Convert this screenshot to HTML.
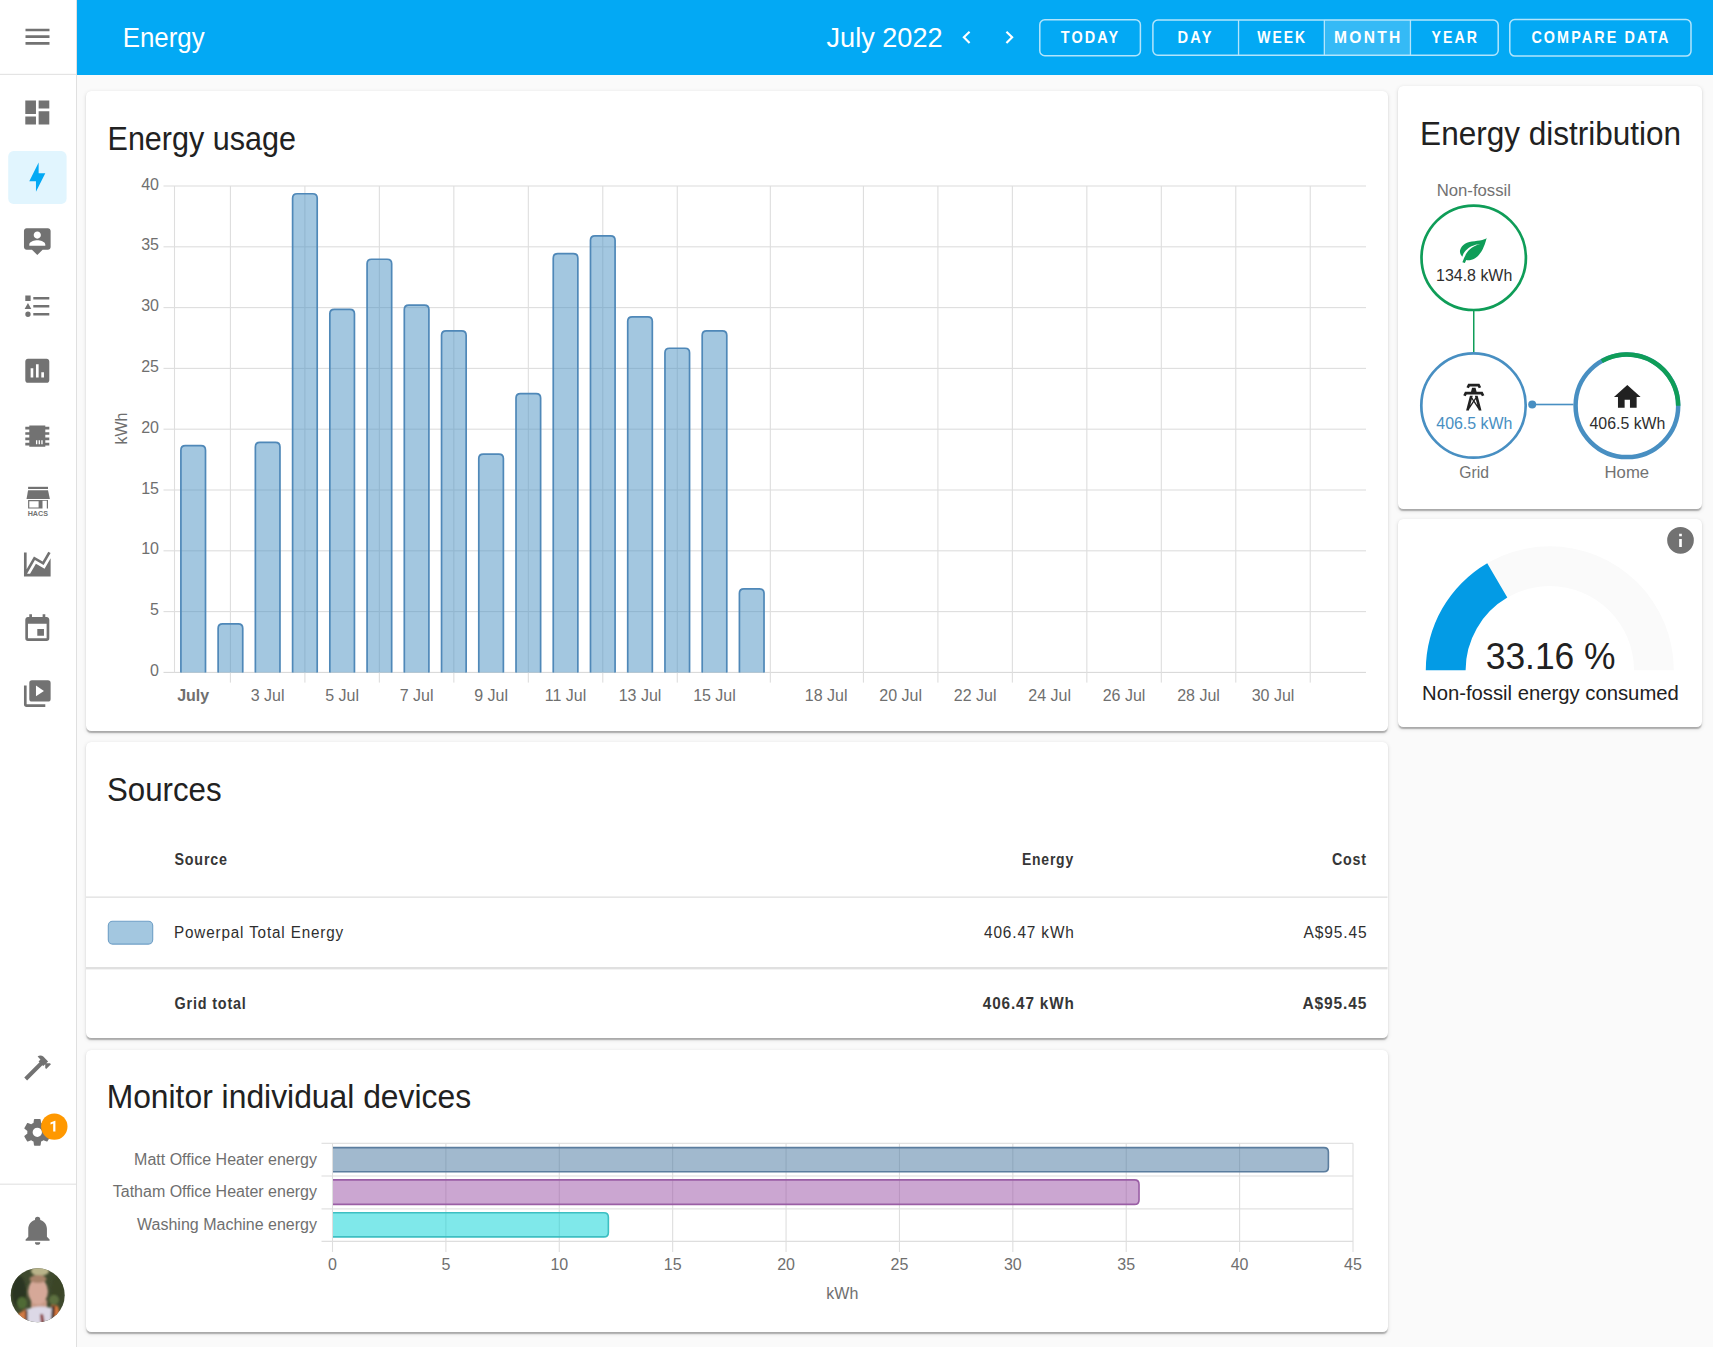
<!DOCTYPE html>
<html><head><meta charset="utf-8"><title>Energy</title>
<style>
html,body{margin:0;padding:0;width:1713px;height:1347px;overflow:hidden;background:#fafafa;font-family:"Liberation Sans",sans-serif}
.card{position:absolute;background:#fff;border-radius:5.3px;box-shadow:0 2.67px 1.33px -1.33px rgba(0,0,0,.13),0 1.33px 1.33px 0 rgba(0,0,0,.14),0 1.33px 4px 0 rgba(0,0,0,.12)}
#sb{position:absolute;left:0;top:0;width:76px;height:1347px;background:#fff;border-right:1px solid #e0e0e0}
svg{position:absolute;left:0;top:0}
</style></head><body>
<div id="sb"></div>
<div class="card" style="left:85.5px;top:91px;width:1302px;height:640px"></div>
<div class="card" style="left:85.5px;top:742px;width:1302px;height:296px"></div>
<div class="card" style="left:85.5px;top:1049.5px;width:1302px;height:282px"></div>
<div class="card" style="left:1398px;top:86px;width:304.3px;height:422.5px"></div>
<div class="card" style="left:1398px;top:519px;width:304.3px;height:208.3px"></div>
<svg width="1713" height="1347" viewBox="0 0 1713 1347" font-family="Liberation Sans, sans-serif">
<rect x="77" y="0" width="1636" height="75" fill="#03a9f4"/>
<text x="122.67" y="46.90" font-size="27.5" fill="#fff" textLength="81.91" lengthAdjust="spacingAndGlyphs">Energy</text>
<text x="826.53" y="46.70" font-size="27.5" fill="#fff" textLength="116.10" lengthAdjust="spacingAndGlyphs">July 2022</text>
<path transform="translate(953.7,24.4) scale(1.08)" d="M15.41,16.58L10.83,12L15.41,7.41L14,6L8,12L14,18L15.41,16.58Z" fill="#fff"/>
<path transform="translate(996.4,24.4) scale(1.08)" d="M8.59,16.58L13.17,12L8.59,7.41L10,6L16,12L10,18L8.59,16.58Z" fill="#fff"/>
<rect x="1039.8" y="19.8" width="100.6" height="36" rx="5" fill="none" stroke="#b3e5fc" stroke-width="1.5"/>
<text x="1060.79" y="43.10" font-size="16.5" font-weight="700" fill="#fff" textLength="59.39" lengthAdjust="spacingAndGlyphs" letter-spacing="2.4">TODAY</text>
<rect x="1324.3" y="19.5" width="86.1" height="36.3" fill="rgba(255,255,255,0.2)"/>
<rect x="1152.9" y="20" width="345.3" height="35.3" rx="5" fill="none" stroke="#b3e5fc" stroke-width="1.5"/>
<rect x="1237.90" y="20" width="1.3" height="35.3" fill="#b3e5fc"/>
<rect x="1323.70" y="20" width="1.3" height="35.3" fill="#b3e5fc"/>
<rect x="1409.80" y="20" width="1.3" height="35.3" fill="#b3e5fc"/>
<text x="1177.59" y="43.00" font-size="16.5" font-weight="700" fill="#fff" textLength="36.02" lengthAdjust="spacingAndGlyphs" letter-spacing="2.4">DAY</text>
<text x="1257.25" y="43.00" font-size="16.5" font-weight="700" fill="#fff" textLength="49.95" lengthAdjust="spacingAndGlyphs" letter-spacing="2.4">WEEK</text>
<text x="1334.07" y="43.00" font-size="16.5" font-weight="700" fill="#fff" textLength="68.42" lengthAdjust="spacingAndGlyphs" letter-spacing="2.4">MONTH</text>
<text x="1431.48" y="43.00" font-size="16.5" font-weight="700" fill="#fff" textLength="47.48" lengthAdjust="spacingAndGlyphs" letter-spacing="2.4">YEAR</text>
<rect x="1509.8" y="19.5" width="181.2" height="36.6" rx="5" fill="none" stroke="#b3e5fc" stroke-width="1.5"/>
<text x="1531.41" y="43.00" font-size="16.5" font-weight="700" fill="#fff" textLength="139.13" lengthAdjust="spacingAndGlyphs" letter-spacing="2.4">COMPARE DATA</text>
<text x="107.52" y="150.00" font-size="32.5" fill="#212121" textLength="188.40" lengthAdjust="spacingAndGlyphs">Energy usage</text>
<rect x="163.5" y="671.85" width="1202.50" height="1.1" fill="#d9d9d9"/>

<text x="159" y="675.90" font-size="16" fill="#6f6f6f" text-anchor="end">0</text>
<rect x="163.5" y="611.05" width="1202.50" height="1.1" fill="#dedede"/>

<text x="159" y="615.10" font-size="16" fill="#6f6f6f" text-anchor="end">5</text>
<rect x="163.5" y="550.25" width="1202.50" height="1.1" fill="#dedede"/>

<text x="159" y="554.30" font-size="16" fill="#6f6f6f" text-anchor="end">10</text>
<rect x="163.5" y="489.45" width="1202.50" height="1.1" fill="#dedede"/>

<text x="159" y="493.50" font-size="16" fill="#6f6f6f" text-anchor="end">15</text>
<rect x="163.5" y="428.65" width="1202.50" height="1.1" fill="#dedede"/>

<text x="159" y="432.70" font-size="16" fill="#6f6f6f" text-anchor="end">20</text>
<rect x="163.5" y="367.85" width="1202.50" height="1.1" fill="#dedede"/>

<text x="159" y="371.90" font-size="16" fill="#6f6f6f" text-anchor="end">25</text>
<rect x="163.5" y="307.05" width="1202.50" height="1.1" fill="#dedede"/>

<text x="159" y="311.10" font-size="16" fill="#6f6f6f" text-anchor="end">30</text>
<rect x="163.5" y="246.25" width="1202.50" height="1.1" fill="#dedede"/>

<text x="159" y="250.30" font-size="16" fill="#6f6f6f" text-anchor="end">35</text>
<rect x="163.5" y="185.45" width="1202.50" height="1.1" fill="#dedede"/>

<text x="159" y="189.50" font-size="16" fill="#6f6f6f" text-anchor="end">40</text>
<rect x="173.95" y="186" width="1.1" height="486.40" fill="#dedede"/>
<rect x="229.88" y="186" width="1.1" height="496.60" fill="#dedede"/>
<rect x="304.35" y="186" width="1.1" height="496.60" fill="#dedede"/>
<rect x="378.82" y="186" width="1.1" height="496.60" fill="#dedede"/>
<rect x="453.29" y="186" width="1.1" height="496.60" fill="#dedede"/>
<rect x="527.77" y="186" width="1.1" height="496.60" fill="#dedede"/>
<rect x="602.24" y="186" width="1.1" height="496.60" fill="#dedede"/>
<rect x="676.71" y="186" width="1.1" height="496.60" fill="#dedede"/>
<rect x="769.79" y="186" width="1.1" height="496.60" fill="#dedede"/>
<rect x="862.88" y="186" width="1.1" height="496.60" fill="#dedede"/>
<rect x="937.35" y="186" width="1.1" height="496.60" fill="#dedede"/>
<rect x="1011.82" y="186" width="1.1" height="496.60" fill="#dedede"/>
<rect x="1086.29" y="186" width="1.1" height="496.60" fill="#dedede"/>
<rect x="1160.76" y="186" width="1.1" height="496.60" fill="#dedede"/>
<rect x="1235.23" y="186" width="1.1" height="496.60" fill="#dedede"/>
<rect x="1309.70" y="186" width="1.1" height="496.60" fill="#dedede"/>
<path d="M180.90,672.40 V450.15 Q180.90,445.65 185.40,445.65 H201.00 Q205.50,445.65 205.50,450.15 V672.40" fill="rgba(72,143,194,0.5)" stroke="#4f88b8" stroke-width="1.7"/>
<path d="M218.13,672.40 V628.35 Q218.13,623.85 222.63,623.85 H238.24 Q242.74,623.85 242.74,628.35 V672.40" fill="rgba(72,143,194,0.5)" stroke="#4f88b8" stroke-width="1.7"/>
<path d="M255.37,672.40 V446.95 Q255.37,442.45 259.87,442.45 H275.47 Q279.97,442.45 279.97,446.95 V672.40" fill="rgba(72,143,194,0.5)" stroke="#4f88b8" stroke-width="1.7"/>
<path d="M292.61,672.40 V198.25 Q292.61,193.75 297.11,193.75 H312.70 Q317.20,193.75 317.20,198.25 V672.40" fill="rgba(72,143,194,0.5)" stroke="#4f88b8" stroke-width="1.7"/>
<path d="M329.84,672.40 V313.85 Q329.84,309.35 334.34,309.35 H349.94 Q354.44,309.35 354.44,313.85 V672.40" fill="rgba(72,143,194,0.5)" stroke="#4f88b8" stroke-width="1.7"/>
<path d="M367.08,672.40 V263.75 Q367.08,259.25 371.58,259.25 H387.17 Q391.67,259.25 391.67,263.75 V672.40" fill="rgba(72,143,194,0.5)" stroke="#4f88b8" stroke-width="1.7"/>
<path d="M404.31,672.40 V309.55 Q404.31,305.05 408.81,305.05 H424.41 Q428.91,305.05 428.91,309.55 V672.40" fill="rgba(72,143,194,0.5)" stroke="#4f88b8" stroke-width="1.7"/>
<path d="M441.55,672.40 V335.35 Q441.55,330.85 446.05,330.85 H461.64 Q466.14,330.85 466.14,335.35 V672.40" fill="rgba(72,143,194,0.5)" stroke="#4f88b8" stroke-width="1.7"/>
<path d="M478.78,672.40 V458.55 Q478.78,454.05 483.28,454.05 H498.88 Q503.38,454.05 503.38,458.55 V672.40" fill="rgba(72,143,194,0.5)" stroke="#4f88b8" stroke-width="1.7"/>
<path d="M516.02,672.40 V398.05 Q516.02,393.55 520.52,393.55 H536.12 Q540.62,393.55 540.62,398.05 V672.40" fill="rgba(72,143,194,0.5)" stroke="#4f88b8" stroke-width="1.7"/>
<path d="M553.25,672.40 V258.15 Q553.25,253.65 557.75,253.65 H573.35 Q577.85,253.65 577.85,258.15 V672.40" fill="rgba(72,143,194,0.5)" stroke="#4f88b8" stroke-width="1.7"/>
<path d="M590.49,672.40 V240.35 Q590.49,235.85 594.99,235.85 H610.58 Q615.08,235.85 615.08,240.35 V672.40" fill="rgba(72,143,194,0.5)" stroke="#4f88b8" stroke-width="1.7"/>
<path d="M627.72,672.40 V321.35 Q627.72,316.85 632.22,316.85 H647.82 Q652.32,316.85 652.32,321.35 V672.40" fill="rgba(72,143,194,0.5)" stroke="#4f88b8" stroke-width="1.7"/>
<path d="M664.96,672.40 V352.75 Q664.96,348.25 669.46,348.25 H685.05 Q689.55,348.25 689.55,352.75 V672.40" fill="rgba(72,143,194,0.5)" stroke="#4f88b8" stroke-width="1.7"/>
<path d="M702.19,672.40 V335.35 Q702.19,330.85 706.69,330.85 H722.29 Q726.79,330.85 726.79,335.35 V672.40" fill="rgba(72,143,194,0.5)" stroke="#4f88b8" stroke-width="1.7"/>
<path d="M739.42,672.40 V593.35 Q739.42,588.85 743.92,588.85 H759.52 Q764.02,588.85 764.02,593.35 V672.40" fill="rgba(72,143,194,0.5)" stroke="#4f88b8" stroke-width="1.7"/>
<text x="193.20" y="700.80" font-size="16" font-weight="700" fill="#6f6f6f" text-anchor="middle">July</text>
<text x="267.67" y="700.80" font-size="16" fill="#6f6f6f" text-anchor="middle">3 Jul</text>
<text x="342.14" y="700.80" font-size="16" fill="#6f6f6f" text-anchor="middle">5 Jul</text>
<text x="416.61" y="700.80" font-size="16" fill="#6f6f6f" text-anchor="middle">7 Jul</text>
<text x="491.08" y="700.80" font-size="16" fill="#6f6f6f" text-anchor="middle">9 Jul</text>
<text x="565.55" y="700.80" font-size="16" fill="#6f6f6f" text-anchor="middle">11 Jul</text>
<text x="640.02" y="700.80" font-size="16" fill="#6f6f6f" text-anchor="middle">13 Jul</text>
<text x="714.49" y="700.80" font-size="16" fill="#6f6f6f" text-anchor="middle">15 Jul</text>
<text x="826.19" y="700.80" font-size="16" fill="#6f6f6f" text-anchor="middle">18 Jul</text>
<text x="900.66" y="700.80" font-size="16" fill="#6f6f6f" text-anchor="middle">20 Jul</text>
<text x="975.13" y="700.80" font-size="16" fill="#6f6f6f" text-anchor="middle">22 Jul</text>
<text x="1049.61" y="700.80" font-size="16" fill="#6f6f6f" text-anchor="middle">24 Jul</text>
<text x="1124.08" y="700.80" font-size="16" fill="#6f6f6f" text-anchor="middle">26 Jul</text>
<text x="1198.55" y="700.80" font-size="16" fill="#6f6f6f" text-anchor="middle">28 Jul</text>
<text x="1273.02" y="700.80" font-size="16" fill="#6f6f6f" text-anchor="middle">30 Jul</text>
<text transform="translate(127,428.6) rotate(-90)" font-size="16" fill="#6f6f6f" text-anchor="middle">kWh</text>
<text x="106.91" y="800.80" font-size="32.5" fill="#212121" textLength="114.68" lengthAdjust="spacingAndGlyphs">Sources</text>
<text x="174.51" y="865.00" font-size="16" font-weight="700" fill="#363636" textLength="53.28" lengthAdjust="spacingAndGlyphs" letter-spacing="0.9">Source</text>
<text x="1022.00" y="865.00" font-size="16" font-weight="700" fill="#363636" textLength="51.93" lengthAdjust="spacingAndGlyphs" letter-spacing="0.9">Energy</text>
<text x="1331.94" y="865.00" font-size="16" font-weight="700" fill="#363636" textLength="34.96" lengthAdjust="spacingAndGlyphs" letter-spacing="0.9">Cost</text>
<rect x="86" y="896.5" width="1301.5" height="1.3" fill="#e0e0e0"/>
<rect x="108.3" y="921.3" width="44.4" height="22.8" rx="4.3" fill="rgba(72,143,194,0.5)" stroke="#6f9fc6" stroke-width="1.1"/>
<text x="174.04" y="937.60" font-size="16" fill="#2e2e2e" textLength="169.97" lengthAdjust="spacingAndGlyphs" letter-spacing="0.9">Powerpal Total Energy</text>
<text x="984.01" y="937.60" font-size="16" fill="#2e2e2e" textLength="90.70" lengthAdjust="spacingAndGlyphs" letter-spacing="0.9">406.47 kWh</text>
<text x="1303.45" y="937.60" font-size="16" fill="#2e2e2e" textLength="64.02" lengthAdjust="spacingAndGlyphs" letter-spacing="0.9">A$95.45</text>
<rect x="86" y="967" width="1301.5" height="2.4" fill="#e0e0e0"/>
<text x="174.59" y="1009.00" font-size="16" font-weight="700" fill="#363636" textLength="72.07" lengthAdjust="spacingAndGlyphs" letter-spacing="0.9">Grid total</text>
<text x="982.81" y="1009.00" font-size="16" font-weight="700" fill="#363636" textLength="91.95" lengthAdjust="spacingAndGlyphs" letter-spacing="0.9">406.47 kWh</text>
<text x="1302.43" y="1009.00" font-size="16" font-weight="700" fill="#363636" textLength="64.82" lengthAdjust="spacingAndGlyphs" letter-spacing="0.9">A$95.45</text>
<text x="106.65" y="1108.20" font-size="32.5" fill="#212121" textLength="364.43" lengthAdjust="spacingAndGlyphs">Monitor individual devices</text>
<rect x="321.5" y="1142.75" width="1031.50" height="1.1" fill="#dedede"/>
<rect x="321.5" y="1175.45" width="1031.50" height="1.1" fill="#dedede"/>
<rect x="321.5" y="1208.35" width="1031.50" height="1.1" fill="#dedede"/>
<rect x="321.5" y="1240.75" width="1031.50" height="1.1" fill="#d9d9d9"/>
<rect x="331.95" y="1143.3" width="1.1" height="108.70" fill="#dedede"/>
<text x="332.50" y="1270" font-size="16" fill="#6f6f6f" text-anchor="middle">0</text>
<rect x="445.34" y="1143.3" width="1.1" height="108.70" fill="#dedede"/>
<text x="445.89" y="1270" font-size="16" fill="#6f6f6f" text-anchor="middle">5</text>
<rect x="558.73" y="1143.3" width="1.1" height="108.70" fill="#dedede"/>
<text x="559.28" y="1270" font-size="16" fill="#6f6f6f" text-anchor="middle">10</text>
<rect x="672.12" y="1143.3" width="1.1" height="108.70" fill="#dedede"/>
<text x="672.67" y="1270" font-size="16" fill="#6f6f6f" text-anchor="middle">15</text>
<rect x="785.51" y="1143.3" width="1.1" height="108.70" fill="#dedede"/>
<text x="786.06" y="1270" font-size="16" fill="#6f6f6f" text-anchor="middle">20</text>
<rect x="898.89" y="1143.3" width="1.1" height="108.70" fill="#dedede"/>
<text x="899.44" y="1270" font-size="16" fill="#6f6f6f" text-anchor="middle">25</text>
<rect x="1012.28" y="1143.3" width="1.1" height="108.70" fill="#dedede"/>
<text x="1012.83" y="1270" font-size="16" fill="#6f6f6f" text-anchor="middle">30</text>
<rect x="1125.67" y="1143.3" width="1.1" height="108.70" fill="#dedede"/>
<text x="1126.22" y="1270" font-size="16" fill="#6f6f6f" text-anchor="middle">35</text>
<rect x="1239.06" y="1143.3" width="1.1" height="108.70" fill="#dedede"/>
<text x="1239.61" y="1270" font-size="16" fill="#6f6f6f" text-anchor="middle">40</text>
<rect x="1352.45" y="1143.3" width="1.1" height="108.70" fill="#dedede"/>
<text x="1353.00" y="1270" font-size="16" fill="#6f6f6f" text-anchor="middle">45</text>
<path d="M333.00,1147.60 H1323.89 Q1328.39,1147.60 1328.39,1152.10 V1167.20 Q1328.39,1171.70 1323.89,1171.70 H333.00" fill="rgba(68,115,158,0.5)" stroke="#5b7d9e" stroke-width="1.6"/>
<path d="M333.00,1179.90 H1134.53 Q1139.03,1179.90 1139.03,1184.40 V1199.90 Q1139.03,1204.40 1134.53,1204.40 H333.00" fill="rgba(152,78,163,0.5)" stroke="#9a5ea5" stroke-width="1.6"/>
<path d="M333.00,1212.80 H603.87 Q608.37,1212.80 608.37,1217.30 V1232.40 Q608.37,1236.90 603.87,1236.90 H333.00" fill="rgba(0,210,213,0.5)" stroke="#3dbfc2" stroke-width="1.6"/>
<text x="317" y="1164.5" font-size="16" fill="#6f6f6f" text-anchor="end">Matt Office Heater energy</text>
<text x="317" y="1197.3" font-size="16" fill="#6f6f6f" text-anchor="end">Tatham Office Heater energy</text>
<text x="317" y="1230.2" font-size="16" fill="#6f6f6f" text-anchor="end">Washing Machine energy</text>
<text x="842.3" y="1299" font-size="16" fill="#6f6f6f" text-anchor="middle">kWh</text>
<text x="1420.12" y="145.10" font-size="32.5" fill="#212121" textLength="261.02" lengthAdjust="spacingAndGlyphs">Energy distribution</text>
<text x="1436.72" y="195.90" font-size="16" fill="#727272" textLength="74.25" lengthAdjust="spacingAndGlyphs">Non-fossil</text>
<circle cx="1473.7" cy="257.8" r="52.2" fill="none" stroke="#0f9d58" stroke-width="2.7"/>
<rect x="1473" y="311" width="1.5" height="41.5" fill="#0f9d58"/>
<text x="1436.06" y="281.40" font-size="16" fill="#2e2e2e" textLength="76.22" lengthAdjust="spacingAndGlyphs">134.8 kWh</text>
<circle cx="1473.5" cy="405.5" r="52.2" fill="none" stroke="#488fc2" stroke-width="2.7"/>
<text x="1436.27" y="428.70" font-size="16" fill="#488fc2" textLength="76.20" lengthAdjust="spacingAndGlyphs">406.5 kWh</text>
<text x="1459.35" y="478.00" font-size="16" fill="#727272" textLength="29.64" lengthAdjust="spacingAndGlyphs">Grid</text>
<circle cx="1532.2" cy="404.5" r="4" fill="#488fc2"/>
<rect x="1532" y="403.7" width="41.5" height="1.6" fill="#488fc2"/>
<circle cx="1626.9" cy="405.8" r="51.3" fill="none" stroke="#488fc2" stroke-width="4.5"/>
<path d="M1678.20,405.80 A51.3,51.3 0 0,0 1601.74,361.10" fill="none" stroke="#0f9d58" stroke-width="4.5"/>
<text x="1589.52" y="428.70" font-size="16" fill="#2e2e2e" textLength="75.87" lengthAdjust="spacingAndGlyphs">406.5 kWh</text>
<text x="1604.56" y="478.00" font-size="16" fill="#727272" textLength="44.54" lengthAdjust="spacingAndGlyphs">Home</text>
<path d="M1425.80,670.30 A124,124 0 0,1 1673.80,670.30 L1634.00,670.30 A84.2,84.2 0 0,0 1465.60,670.30Z" fill="#fafafa"/>
<path d="M1425.80,670.30 A124,124 0 0,1 1487.22,563.25 L1507.30,597.61 A84.2,84.2 0 0,0 1465.60,670.30Z" fill="#039be5"/>
<text x="1485.71" y="669.30" font-size="36" fill="#212121" textLength="129.88" lengthAdjust="spacingAndGlyphs">33.16 %</text>
<text x="1422.00" y="699.50" font-size="19.5" fill="#212121" textLength="256.80" lengthAdjust="spacingAndGlyphs">Non-fossil energy consumed</text>
<path transform="translate(21.50,20.70) scale(1.3333)" d="M3,6H21V8H3V6M3,11H21V13H3V11M3,16H21V18H3V16Z" fill="#727272"/>
<rect x="0" y="73.8" width="76" height="1.2" fill="#e4e4e4"/>
<rect x="8.2" y="151.1" width="58.4" height="52.8" rx="5.3" fill="#e1f5fe"/>
<path transform="translate(21.30,96.60) scale(1.3333)" d="M13,3V9H21V3M13,21H21V11H13M3,21H11V15H3M3,13H11V3H3Z" fill="#727272"/>
<path transform="translate(21.30,161.15) scale(1.3333)" d="M11 15H6L13 1V9H18L11 23V15Z" fill="#03a9f4"/>
<path transform="translate(21.30,225.70) scale(1.3333)" d="M20 2H4C2.9 2 2 2.9 2 4V16C2 17.1 2.9 18 4 18H8L12 22L16 18H20C21.1 18 22 17.1 22 16V4C22 2.9 21.1 2 20 2M12 4.3C13.5 4.3 14.7 5.5 14.7 7S13.5 9.7 12 9.7 9.3 8.5 9.3 7 10.5 4.3 12 4.3M18 15H6V14.1C6 12.1 10 11 12 11S18 12.1 18 14.1V15Z" fill="#727272"/>
<path transform="translate(21.30,290.25) scale(1.3333)" d="M5,9.5L7.5,14H2.5L5,9.5M3,4H7V8H3V4M5,20A2,2 0 0,0 7,18A2,2 0 0,0 5,16A2,2 0 0,0 3,18A2,2 0 0,0 5,20M9,5V7H21V5H9M9,19H21V17H9V19M9,13H21V11H9V13Z" fill="#727272"/>
<path transform="translate(21.30,354.80) scale(1.3333)" d="M19 3H5C3.9 3 3 3.9 3 5V19C3 20.1 3.9 21 5 21H19C20.1 21 21 20.1 21 19V5C21 3.9 20.1 3 19 3M9 17H7V10H9V17M13 17H11V7H13V17M17 17H15V13H17V17Z" fill="#727272"/>
<path transform="translate(21.30,420.15) scale(1.3333)" d="M6,4H18V5H21V7H18V9H21V11H18V13H21V15H18V17H21V19H18V20H6V19H3V17H6V15H3V13H6V11H3V9H6V7H3V5H6V4M11,15V18H12V15H11M13,15V18H14V15H13M15,15V18H16V15H15Z" fill="#727272"/>
<path transform="translate(21.30,548.45) scale(1.3333)" d="M17.45,15.18L22,7.31V19L22,21H2V3H4V15.54L9.5,6L16,9.78L20.24,2.45L21.97,3.45L16.74,12.5L10.23,8.75L4.31,19H6.57L10.96,11.44L17.45,15.18Z" fill="#727272"/>
<path transform="translate(21.30,613.00) scale(1.3333)" d="M19,19H5V8H19M16,1V3H8V1H6V3H5C3.89,3 3,3.89 3,5V19A2,2 0 0,0 5,21H19A2,2 0 0,0 21,19V5C21,3.89 20.1,3 19,3H18V1M17,12H12V17H17V12Z" fill="#727272"/>
<path transform="translate(21.30,677.55) scale(1.3333)" d="M22,16V4A2,2 0 0,0 20,2H8A2,2 0 0,0 6,4V16A2,2 0 0,0 8,18H20A2,2 0 0,0 22,16M11,14V6L17,10L11,14M2,6V20A2,2 0 0,0 4,22H18V20H4V6H2Z" fill="#727272"/>
<rect x="28.1" y="486.8" width="19.9" height="2.2" fill="#727272"/>
<path d="M28.1,490.3 H48 L49.9,498.9 H26.5 Z" fill="#727272"/>
<path d="M28.1,500 H48 V508.6 H46.8 V500.8 H42.5 V508.6 H28.1 Z M29.3,501.2 V507.4 H38.6 V501.2 Z" fill="#727272" fill-rule="evenodd"/>
<text x="37.85" y="516.4" font-size="7.2" font-weight="700" fill="#727272" text-anchor="middle" textLength="20.3" lengthAdjust="spacingAndGlyphs">HACS</text>
<path transform="translate(21.60,1051.40) scale(1.3333)" d="M2 19.63L13.43 8.2L12.72 7.5L14.14 6.07L12 3.89C13.2 2.7 15.09 2.7 16.27 3.89L19.87 7.5L18.45 8.91H21.29L22 9.62L18.45 13.21L17.74 12.5V9.62L16.27 11.04L15.56 10.33L4.13 21.76L2 19.63Z" fill="#727272"/>
<path transform="translate(21.30,1116.30) scale(1.3333)" d="M12,15.5A3.5,3.5 0 0,1 8.5,12A3.5,3.5 0 0,1 12,8.5A3.5,3.5 0 0,1 15.5,12A3.5,3.5 0 0,1 12,15.5M19.43,12.97C19.47,12.65 19.5,12.33 19.5,12C19.5,11.67 19.47,11.34 19.43,11L21.54,9.37C21.73,9.22 21.78,8.95 21.66,8.73L19.66,5.27C19.54,5.05 19.27,4.96 19.05,5.05L16.56,6.05C16.04,5.66 15.5,5.32 14.87,5.07L14.5,2.42C14.46,2.18 14.25,2 14,2H10C9.75,2 9.54,2.18 9.5,2.42L9.13,5.07C8.5,5.32 7.96,5.66 7.44,6.05L4.95,5.05C4.73,4.96 4.46,5.05 4.34,5.27L2.34,8.73C2.21,8.95 2.27,9.22 2.46,9.37L4.57,11C4.53,11.34 4.5,11.67 4.5,12C4.5,12.33 4.53,12.65 4.57,12.97L2.46,14.63C2.27,14.78 2.21,15.05 2.34,15.27L4.34,18.73C4.46,18.95 4.73,19.03 4.95,18.95L7.44,17.94C7.96,18.34 8.5,18.68 9.13,18.93L9.5,21.58C9.54,21.82 9.75,22 10,22H14C14.25,22 14.46,21.82 14.5,21.58L14.87,18.93C15.5,18.67 16.04,18.34 16.56,17.94L19.05,18.95C19.27,19.03 19.54,18.95 19.66,18.73L21.66,15.27C21.78,15.05 21.73,14.78 21.54,14.63L19.43,12.97Z" fill="#727272"/>
<circle cx="54.3" cy="1126.6" r="13.2" fill="#ff9800"/>
<path d="M55.4,1120.7 V1131.4 H53.2 V1123.5 L50.5,1124.4 V1122.6 L55,1120.7 Z" fill="#fff"/>
<rect x="0" y="1183.6" width="76" height="1.2" fill="#e4e4e4"/>
<path transform="translate(21.60,1214.20) scale(1.3333)" d="M21,19V20H3V19L5,17V11C5,7.9 7.03,5.17 10,4.29C10,4.19 10,4.1 10,4A2,2 0 0,1 12,2A2,2 0 0,1 14,4C14,4.1 14,4.19 14,4.29C16.97,5.17 19,7.9 19,11V17L21,19M14,21A2,2 0 0,1 12,23A2,2 0 0,1 10,21" fill="#727272"/>
<defs><clipPath id="av"><circle cx="37.7" cy="1295.2" r="27"/></clipPath><filter id="bl"><feGaussianBlur stdDeviation="1.1"/></filter></defs>
<g clip-path="url(#av)"><rect x="10" y="1268" width="56" height="56" fill="#3f4a2e"/><g filter="url(#bl)"><ellipse cx="40" cy="1271" rx="9" ry="5" fill="#b9b48a"/><ellipse cx="19" cy="1292" rx="7" ry="16" fill="#2c3520"/><ellipse cx="57" cy="1290" rx="6" ry="14" fill="#3a4428"/><ellipse cx="54" cy="1300" rx="5" ry="5" fill="#5d7040"/><ellipse cx="22" cy="1303" rx="5" ry="6" fill="#4f6a35"/><rect x="31" y="1300" width="16" height="10" fill="#c79a86"/><ellipse cx="38" cy="1291.5" rx="10" ry="13" fill="#d6a898"/><ellipse cx="38" cy="1279" rx="8.5" ry="4" fill="#a8836a"/><path d="M22,1324 L25,1310 Q38,1304 52,1308 L57,1324 Z" fill="#dcd8e6"/><path d="M18,1314 L26,1309 L27,1324 L16,1324Z" fill="#d27a45"/><path d="M51,1305 L58,1306 L60,1316 L54,1318Z" fill="#d8773e"/><path d="M52,1306 L55,1306 L54,1320 L51,1320Z" fill="#3a2a25"/><path d="M25.5,1310 L27.5,1310 L27.5,1322 L25.5,1322Z" fill="#3a2a25"/><path d="M40,1314 L43,1314 L45,1324 L41,1324Z" fill="#8a3a3a"/></g></g>
<path transform="translate(1457.30,233.70) scale(1.3333)" d="M17,8C8,10 5.9,16.17 3.82,21.34L5.71,22L6.66,19.7C7.14,19.87 7.64,20 8,20C19,20 22,3 22,3C21,5 14,5.25 9,6.25C4,7.25 2,11.5 2,13.5C2,15.5 3.75,17.25 3.75,17.25C7,8 17,8 17,8Z" fill="#0f9d58"/>
<path transform="translate(1457.80,381.10) scale(1.3333)" d="M8.28,5.45L6.5,4.55L7.76,2H16.23L17.5,4.55L15.72,5.44L15,4H9L8.28,5.45M18.62,8H14.09L13.3,5H10.7L9.91,8H5.38L4.1,10.55L5.89,11.44L6.62,10H17.38L18.1,11.45L19.89,10.56L18.62,8M17.77,22H15.7L15.46,21.1L12,15.9L8.53,21.1L8.3,22H6.23L9.12,11H11.19L10.83,12.35L12,14.1L13.16,12.35L12.81,11H14.88L17.77,22M11.4,15L10.5,13.65L9.32,18.13L11.4,15M14.68,18.12L13.5,13.64L12.6,15L14.68,18.12Z" fill="#212121"/>
<path transform="translate(1611.30,381.00) scale(1.3333)" d="M10,20V14H14V20H19V12H22L12,3L2,12H5V20H10Z" fill="#212121"/>
<path transform="translate(1664.50,524.30) scale(1.3333)" d="M13,9H11V7H13M13,17H11V11H13M12,2A10,10 0 0,0 2,12A10,10 0 0,0 12,22A10,10 0 0,0 12,2Z" fill="#727272"/>
</svg>
</body></html>
